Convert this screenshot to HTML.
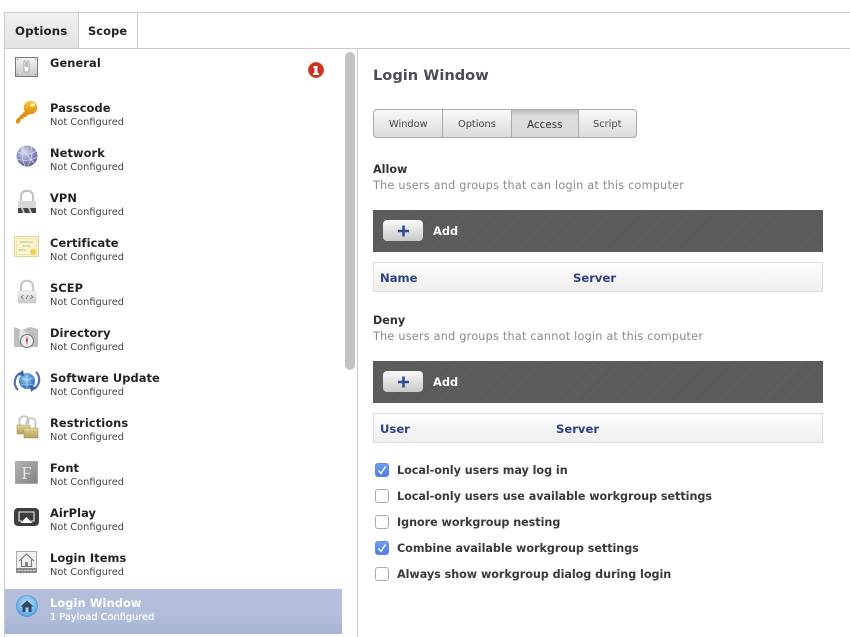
<!DOCTYPE html>
<html><head><meta charset="utf-8">
<style>
html,body{margin:0;padding:0;background:#fff}
#p{position:relative;width:850px;height:637px;overflow:hidden;background:#fff;font-family:"DejaVu Sans","Liberation Sans",sans-serif;color:#333;filter:blur(.3px)}
.a{position:absolute;white-space:nowrap}
.t{position:absolute;left:50px;font-size:11.4px;font-weight:bold;line-height:14px;color:#222;white-space:nowrap;letter-spacing:.1px}
.s{position:absolute;left:50px;font-size:9.8px;line-height:12px;color:#444;white-space:nowrap}
.bar{position:absolute;left:373px;width:450px;height:42px;background:repeating-linear-gradient(135deg,#626262 0 1px,#555 1px 2px)}
.btn{position:absolute;left:10px;top:10px;width:40px;height:21px;border-radius:4px;background:linear-gradient(#fafafa,#c9c9c9);}
.add{position:absolute;left:60px;top:14px;color:#fff;font-weight:bold;font-size:11.4px;line-height:14px}
.hd{position:absolute;left:373px;width:448px;height:28px;border:1px solid #ddd;background:linear-gradient(#fdfdfd,#eee)}
.hd span{position:absolute;top:8px;font-size:11.6px;line-height:14px;font-weight:bold;color:#2c3f85}
.cb{position:absolute;left:375px;width:12px;height:12px;border:1px solid #aaa;border-radius:3px;background:#fff}
.cb.on{background:linear-gradient(#6d9cf2,#4f7fe6);border-color:#6189e0}
.cl{position:absolute;left:397px;font-size:11.2px;font-weight:bold;line-height:14px;color:#3a3a3a;white-space:nowrap;letter-spacing:-.04px}
.sg{position:absolute;top:9px;font-size:9.8px;line-height:12px;color:#444}
</style></head><body><div id="p">
<div class="a" style="left:4px;top:12px;width:846px;height:1px;background:#ccc"></div>
<div class="a" style="left:4px;top:12px;width:1px;height:625px;background:#ccc"></div>
<div class="a" style="left:5px;top:13px;width:73px;height:35px;background:linear-gradient(#f0f0f0,#e4e4e4)"></div>
<div class="a" style="left:78px;top:13px;width:1px;height:35px;background:#ccc"></div>
<div class="a" style="left:137px;top:13px;width:1px;height:35px;background:#ccc"></div>
<div class="a" style="left:5px;top:48px;width:845px;height:1px;background:#ccc"></div>
<div class="a" style="left:15px;top:24px;font-size:11.8px;font-weight:bold;line-height:14px;color:#222;letter-spacing:.1px">Options</div>
<div class="a" style="left:88px;top:24px;font-size:11.4px;font-weight:bold;line-height:14px;color:#222;letter-spacing:.1px">Scope</div>

<div class="a" style="left:5px;top:589px;width:337px;height:45px;background:linear-gradient(#b3bedb 0,#b3bedb 55%,#a7b3d3 100%)"></div>
<div class="a" style="left:345px;top:52px;width:10px;height:318px;border-radius:5px;background:#c3c3c3"></div>
<div class="a" style="left:357px;top:49px;width:1px;height:588px;background:#ccc"></div>

<div class="t" style="top:56px">General</div>
<div class="t" style="top:101px">Passcode</div><div class="s" style="top:117px">Not Configured</div>
<div class="t" style="top:146px">Network</div><div class="s" style="top:162px">Not Configured</div>
<div class="t" style="top:191px">VPN</div><div class="s" style="top:207px">Not Configured</div>
<div class="t" style="top:236px">Certificate</div><div class="s" style="top:252px">Not Configured</div>
<div class="t" style="top:281px">SCEP</div><div class="s" style="top:297px">Not Configured</div>
<div class="t" style="top:326px">Directory</div><div class="s" style="top:342px">Not Configured</div>
<div class="t" style="top:371px">Software Update</div><div class="s" style="top:387px">Not Configured</div>
<div class="t" style="top:416px">Restrictions</div><div class="s" style="top:432px">Not Configured</div>
<div class="t" style="top:461px">Font</div><div class="s" style="top:477px">Not Configured</div>
<div class="t" style="top:506px">AirPlay</div><div class="s" style="top:522px">Not Configured</div>
<div class="t" style="top:551px">Login Items</div><div class="s" style="top:567px">Not Configured</div>
<div class="t" style="top:596px;color:#fff">Login Window</div><div class="s" style="top:612px;color:#fff;text-shadow:0 0 .6px #fff;font-size:9.8px">1 Payload Configured</div>

<svg class="a" style="left:0;top:0" width="358" height="637" viewBox="0 0 358 637">
<defs>
<linearGradient id="gy" x1="0" y1="0" x2="0" y2="1"><stop offset="0" stop-color="#f4f4f4"/><stop offset="1" stop-color="#c8c8c8"/></linearGradient>
<linearGradient id="gold" x1="0" y1="0" x2="0" y2="1"><stop offset="0" stop-color="#f9c83e"/><stop offset="1" stop-color="#dc8c10"/></linearGradient>
<radialGradient id="gl" cx=".4" cy=".3" r=".8"><stop offset="0" stop-color="#d4d6ee"/><stop offset=".6" stop-color="#8587b6"/><stop offset="1" stop-color="#54567f"/></radialGradient>
<radialGradient id="bl" cx=".45" cy=".4" r=".7"><stop offset="0" stop-color="#9fd3f5"/><stop offset=".7" stop-color="#3a7fc8"/><stop offset="1" stop-color="#1f4f9a"/></radialGradient>
<radialGradient id="lb" cx=".5" cy=".4" r=".7"><stop offset="0" stop-color="#c3e4fa"/><stop offset=".8" stop-color="#5aa8e8"/><stop offset="1" stop-color="#3c80c8"/></radialGradient>
<linearGradient id="br" x1="0" y1="0" x2="0" y2="1"><stop offset="0" stop-color="#e6d79b"/><stop offset="1" stop-color="#b39c58"/></linearGradient>
<linearGradient id="f" x1="0" y1="0" x2="1" y2="1"><stop offset="0" stop-color="#b4b4b4"/><stop offset="1" stop-color="#808080"/></linearGradient>
</defs>
<!-- General -->
<rect x="15.500" y="57.500" width="22" height="19" fill="url(#gy)" stroke="#777"/>
<rect x="24" y="61" width="5" height="11" rx="1" fill="#fff" stroke="#999" stroke-width=".8"/>
<rect x="25" y="62" width="3" height="5" fill="#bbb"/>
<g fill="#777"><rect x="17" y="59" width="1" height="1"/><rect x="35" y="59" width="1" height="1"/><rect x="17" y="74" width="1" height="1"/><rect x="35" y="74" width="1" height="1"/></g>
<!-- Key -->
<circle cx="30.500" cy="107.500" r="6.800" fill="url(#gold)"/>
<path d="M26 110l4 3.500-4.500 3.500H23.500v2H21l-.5 2.500-2 2-2.500-.5v-3z" fill="#dd9414"/>
<ellipse cx="32.500" cy="105" rx="2.400" ry="1.700" fill="#fff2b8"/>
<!-- Globe -->
<circle cx="27" cy="156" r="10.500" fill="url(#gl)"/>
<path d="M18 152c6 3 13 3 18-1M17 159c6 2 14 2 20-2M24 146c-3 6-2 14 1 20M31 146c2 6 1 13-3 20M21 148l13 15" fill="none" stroke="#e8e8f6" stroke-width=".6"/>
<!-- VPN -->
<path d="M21 202v-6c0-7 12-7 12 0v6" fill="none" stroke="#c4c4c4" stroke-width="2.200"/>
<rect x="18" y="201" width="18" height="12" fill="#d6d6d6"/>
<rect x="18" y="208" width="18" height="5" fill="#444"/>
<path d="M21 208h2l2 5h-2zM28 208h2l2 5h-2z" fill="#ccc"/>
<!-- Certificate -->
<rect x="14.500" y="236.500" width="24" height="20" fill="#faf5cf" stroke="#dcd49c"/>
<rect x="16.500" y="238.500" width="20" height="16" fill="none" stroke="#e8dfa8" stroke-width=".7"/>
<path d="M20 242h13M22 246h9M18 250h8" stroke="#c4bd94" stroke-width="1"/>
<circle cx="33" cy="252" r="3" fill="#f0cf4a"/>
<!-- SCEP -->
<path d="M21 292v-6c0-7 12-7 12 0v6" fill="none" stroke="#c8c8c8" stroke-width="2.200"/>
<rect x="18" y="291" width="18" height="12" rx="1" fill="url(#gy)" stroke="#c4c4c4" stroke-width=".5"/>
<path d="M23.500 295l-2.500 2 2.500 2M30.500 295l2.500 2-2.500 2M26 299l2-4" fill="none" stroke="#666" stroke-width=".8"/>
<!-- Directory -->
<path d="M14 327l8 3 8-3 8 2v18H14z" fill="#bfbfbf"/><path d="M20 329l8 4 3 14h-9l-3-9z" fill="#e4e4e4"/>
<circle cx="27" cy="341" r="6.500" fill="#f0f0f0" stroke="#777" stroke-width="1.100"/>
<path d="M27 336l1.200 5h-2.400z" fill="#c33"/><path d="M27 346l1.200-5h-2.400z" fill="#999"/>
<!-- Software update -->
<circle cx="27" cy="381" r="8" fill="url(#bl)"/>
<path d="M20 373c-6 4-7 12-2 17" fill="none" stroke="#5470b4" stroke-width="2.200"/><path d="M34 389c6-4 7-12 2-17" fill="none" stroke="#5470b4" stroke-width="2.200"/>
<path d="M17 375l6-5 1 6zM37 387l-6 5-1-6z" fill="#3c5fa8"/>
<path d="M21 378c4 2 8 2 12 0M21 385c4-1 8-1 12 0M27 373v16" stroke="#cfe6fa" stroke-width=".6" fill="none"/>
<!-- Restrictions -->
<path d="M19.500 426v-6c0-5 9-5 9 0v4" fill="none" stroke="#c4c4c4" stroke-width="1.800"/>
<rect x="17" y="425" width="13" height="9" fill="url(#br)" stroke="#a8935a" stroke-width=".5"/>
<path d="M26.500 429v-7c0-5 9-5 9 0v7" fill="none" stroke="#c8c8c8" stroke-width="1.800"/>
<rect x="24" y="428" width="14" height="10" fill="url(#br)" stroke="#a8935a" stroke-width=".5"/>
<!-- Font -->
<rect x="15.500" y="461.500" width="22" height="22" fill="url(#f)" stroke="#aaa"/>
<text x="26.500" y="479" text-anchor="middle" font-family="Liberation Serif,serif" font-size="18" fill="#e4e4e4">F</text>
<!-- AirPlay -->
<rect x="14" y="508" width="25" height="18" rx="4" fill="#3d3d3d"/>
<path d="M22 521h-3v-9h15v9h-3" fill="none" stroke="#f2f2f2" stroke-width="1.100"/>
<path d="M26.500 517l6 6h-12z" fill="#fff"/>
<!-- Login items -->
<rect x="16.500" y="551.500" width="20" height="21" fill="#f0f0f0" stroke="#aaa"/>
<rect x="16" y="568" width="21" height="5" fill="#8a8a8a"/>
<path d="M19 561l7.500-7 7.500 7M21.500 559.500v7h10v-7" fill="none" stroke="#777" stroke-width="1.100"/>
<rect x="25" y="562" width="3" height="4.500" fill="#888"/>
<path d="M18 570.500h17" stroke="#ddd" stroke-dasharray="2 1" stroke-width="1"/>
<!-- Login window -->
<circle cx="27" cy="606" r="10.500" fill="url(#lb)" stroke="#4a85c8" stroke-width=".6"/>
<path d="M20.500 606.500l6.500-6 6.500 6h-2v5.500h-9v-5.500z" fill="#2f4a62"/>
<rect x="25.500" y="607.500" width="3" height="4.500" fill="#a5d2f2"/>
<!-- Badge -->
<circle cx="316" cy="70" r="8" fill="#c93120"/>
<circle cx="316" cy="70" r="7.500" fill="none" stroke="#e2705c" stroke-width=".6"/>
<path d="M313.500 66h4v7h1.500v2h-6v-2h1.500v-5h-1z" fill="#fff"/>
</svg>

<div class="a" style="left:373px;top:67px;font-size:14.6px;font-weight:bold;line-height:18px;color:#4a4d57">Login Window</div>

<div class="a" style="left:373px;top:109px;width:264px;height:29px;border-radius:4px;overflow:hidden;box-sizing:border-box;border:1px solid #a9a9a9;background:linear-gradient(#f8f8f8,#dcdcdc)">
<div class="a" style="left:68px;top:0;width:1px;height:27px;background:#a9a9a9"></div>
<div class="a" style="left:137px;top:0;width:66px;height:27px;background:linear-gradient(#bdbdbd,#dfdfdf 25%,#d8d8d8);border-left:1px solid #a9a9a9;border-right:1px solid #a9a9a9"></div>
<div class="sg" style="left:15px">Window</div>
<div class="sg" style="left:84px">Options</div>
<div class="sg" style="left:153px;font-size:10.4px;color:#333">Access</div>
<div class="sg" style="left:219px">Script</div>
</div>

<div class="a" style="left:373px;top:163px;font-size:11.200px;font-weight:bold;line-height:14px;color:#333">Allow</div>
<div class="a" style="left:373px;top:179px;font-size:11.200px;line-height:14px;color:#8a8a8a;letter-spacing:.25px">The users and groups that can login at this computer</div>
<div class="bar" style="top:210px"><div class="btn"><svg width="40" height="21"><path d="M15 11h11M20.500 5.500v11" stroke="#2f4d96" stroke-width="2.600"/></svg></div><div class="add">Add</div></div>
<div class="hd" style="top:262px"><span style="left:6px">Name</span><span style="left:199px">Server</span></div>

<div class="a" style="left:373px;top:314px;font-size:11.200px;font-weight:bold;line-height:14px;color:#333">Deny</div>
<div class="a" style="left:373px;top:330px;font-size:11.200px;line-height:14px;color:#8a8a8a;letter-spacing:.25px">The users and groups that cannot login at this computer</div>
<div class="bar" style="top:361px"><div class="btn"><svg width="40" height="21"><path d="M15 11h11M20.500 5.500v11" stroke="#2f4d96" stroke-width="2.600"/></svg></div><div class="add">Add</div></div>
<div class="hd" style="top:413px"><span style="left:6px">User</span><span style="left:182px">Server</span></div>

<div class="cb on" style="top:463px"><svg width="12" height="12" style="display:block"><path d="M2.500 6.500l2.500 3 4.500-7" fill="none" stroke="#fff" stroke-width="1.400"/></svg></div>
<div class="cl" style="top:464px">Local-only users may log in</div>
<div class="cb" style="top:489px"></div>
<div class="cl" style="top:490px">Local-only users use available workgroup settings</div>
<div class="cb" style="top:515px"></div>
<div class="cl" style="top:516px">Ignore workgroup nesting</div>
<div class="cb on" style="top:541px"><svg width="12" height="12" style="display:block"><path d="M2.500 6.500l2.500 3 4.500-7" fill="none" stroke="#fff" stroke-width="1.400"/></svg></div>
<div class="cl" style="top:542px">Combine available workgroup settings</div>
<div class="cb" style="top:567px"></div>
<div class="cl" style="top:568px">Always show workgroup dialog during login</div>
</div></body></html>
